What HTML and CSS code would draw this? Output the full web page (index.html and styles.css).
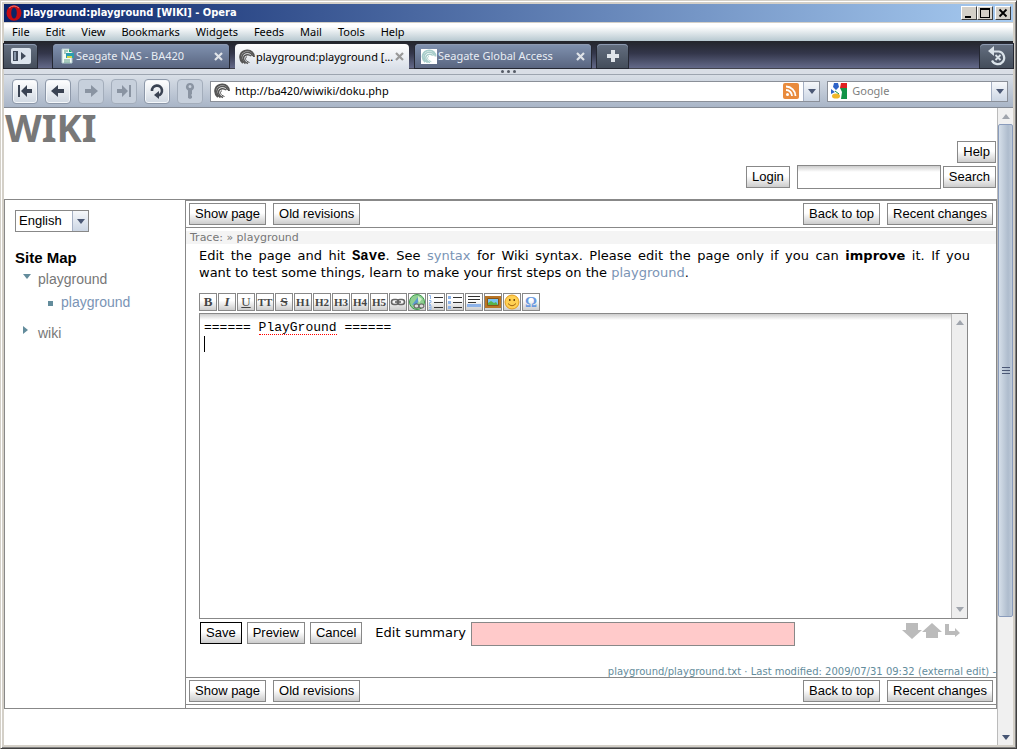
FILE: index.html
```html
<!DOCTYPE html>
<html lang="en">
<head>
<meta charset="utf-8">
<title>playground:playground [WIKI]</title>
<link rel="stylesheet" href="styles.css">
</head>
<body>
<svg class="defs" aria-hidden="true">
  <defs>
    <symbol id="swirl" viewBox="0 0 16 16">
      <g fill="none" stroke="currentColor">
        <path stroke-width="2" d="M4 14C-1 9 1 2 8 1.500C12 1.200 15 4 15 8"/>
        <path stroke-width="1.600" d="M6.500 14.500C0 10 3 4 8 3.500C11 3.200 13 5 13.500 7"/>
        <path stroke-width="1.500" d="M9 14.500C3 12 3.500 6.500 8 5.700C10 5.400 11 6 12 7"/>
        <path stroke-width="1" d="M10.500 13.500C6 12 5.500 9 8 7.500"/>
      </g>
    </symbol>
    <symbol id="down" viewBox="0 0 8 5"><path fill="currentColor" d="M0 0h8L4 5z"/></symbol>
    <symbol id="up" viewBox="0 0 8 5"><path fill="currentColor" d="M0 5h8L4 0z"/></symbol>
    <symbol id="cross" viewBox="0 0 9 9"><path stroke="currentColor" stroke-width="2.200" d="M1 1l7 7M8 1L1 8"/></symbol>
  </defs>
</svg>
<div class="window">
  <header class="titlebar">
    <svg class="opera" viewBox="0 0 16 16"><ellipse cx="8" cy="8" rx="7.500" ry="7.800" fill="#c60c12"/><path d="M3 3q5-4 10 0" stroke="#f47a70" fill="none"/><ellipse cx="8" cy="8" rx="2.800" ry="5.500" fill="#0b2567"/></svg>
    <span class="title">playground:playground [WIKI] - Opera</span>
    <div class="winbuttons">
      <button aria-label="Minimize"><svg viewBox="0 0 12 10"><path d="M2 8h6v2H2z"/></svg></button>
      <button aria-label="Maximize"><svg viewBox="0 0 12 10"><path fill-rule="evenodd" d="M1 0h10v10H1zM2 2v7h8V2z"/></svg></button>
      <button class="close" aria-label="Close"><svg viewBox="0 0 12 10"><path stroke="#000" stroke-width="1.800" d="M2.500 1.500l7 7M9.500 1.500l-7 7"/></svg></button>
    </div>
  </header>
  <nav class="menubar">
    <button>File</button><button>Edit</button><button>View</button><button>Bookmarks</button><button>Widgets</button><button>Feeds</button><button>Mail</button><button>Tools</button><button>Help</button>
  </nav>
  <div class="tabbar">
    <button class="panel" aria-label="Panels"><svg viewBox="0 0 20 16"><rect width="20" height="16" rx="2" fill="#dce4ed"/><path fill="#414b5b" d="M2 3h5v10H2zM10 4l5 4-5 4z"/><path fill="#8695a8" d="M3 4h2v8H3z"/></svg></button>
    <div class="tab">
      <svg class="favicon" viewBox="0 0 16 16"><path d="M3 1h7l3 3v11H3z" fill="#f4fbf5" stroke="#b4cdd0"/><path d="M5 3h4M5 5h2M5 12h6M5 14h6" stroke="#5b9a86"/><path d="M7 5h8v5H7z" fill="#2b9db0"/><path d="M8 8h5v2H8z" fill="#d5d94b"/><path d="M10 1l3 3h-3z" fill="#20a866"/></svg>
      <span>Seagate NAS - BA420</span><button aria-label="Close tab"><svg><use href="#cross"/></svg></button>
    </div>
    <div class="tab active">
      <svg class="favicon dark"><use href="#swirl"/></svg>
      <span>playground:playground [...</span><button aria-label="Close tab"><svg><use href="#cross"/></svg></button>
    </div>
    <div class="tab">
      <svg class="favicon teal"><use href="#swirl"/></svg>
      <span>Seagate Global Access</span><button aria-label="Close tab"><svg><use href="#cross"/></svg></button>
    </div>
    <button class="newtab" aria-label="New tab"><svg viewBox="0 0 12 12"><path fill="#dfe4ea" d="M4 0h4v4h4v4H8v4H4V8H0V4h4z"/></svg></button>
    <button class="trash" aria-label="Closed tabs"><svg viewBox="0 0 20 20"><path fill="none" stroke="#d9e2e9" stroke-width="2.200" d="M6 5.500h6a6.400 6.400 0 1 1-7 9"/><path fill="#d9e2e9" d="M1 5l6-5v10z"/><path stroke="#d9e2e9" stroke-width="1.800" d="M8.500 9l5 5M13.500 9l-5 5"/></svg></button>
  </div>
  <div class="splitter"><i></i><i></i><i></i></div>
  <div class="toolbar">
    <button aria-label="Rewind"><svg viewBox="0 0 16 16"><path d="M1 2h2v12H1zM4 8l6-6v4h5v4h-5v4z"/></svg></button>
    <button aria-label="Back"><svg viewBox="0 0 16 16"><path d="M1 8l7-6v4h6v4H8v4z"/></svg></button>
    <button class="off" aria-label="Forward"><svg viewBox="0 0 16 16"><path d="M15 8L8 2v4H2v4h6v4z"/></svg></button>
    <button class="off" aria-label="Fast forward"><svg viewBox="0 0 16 16"><path d="M15 2h-2v12h2zM12 8L6 2v4H1v4h5v4z"/></svg></button>
    <button aria-label="Reload"><svg viewBox="0 0 16 16"><path fill="none" stroke="#3a4353" stroke-width="2.600" d="M3 8a5 5 0 1 1 6 4.500"/><path d="M5 12l5-4v8z"/></svg></button>
    <button class="off" aria-label="Wand"><svg viewBox="0 0 16 16"><path fill-rule="evenodd" d="M8 0a4 4 0 0 0-2 7.500V15l2 1 2-1v-2l-1-1 1-1V7.500A4 4 0 0 0 8 0zm0 2a1.500 1.500 0 1 1 0 3 1.500 1.500 0 0 1 0-3z"/></svg></button>
    <div class="field address">
      <svg class="favicon dark"><use href="#swirl"/></svg>
      <input aria-label="Address" value="http://ba420/wiwiki/doku.php">
      <svg class="feed" viewBox="0 0 16 16"><rect width="16" height="16" rx="2" fill="#e98b3d"/><circle cx="4.500" cy="11.500" r="1.500" fill="#fff"/><path fill="none" stroke="#fff" stroke-width="1.800" d="M3 7a6 6 0 0 1 6 6M3 3.500a9.500 9.500 0 0 1 9.500 9.500"/></svg>
      <button class="drop" aria-label="Address history"><svg><use href="#down"/></svg></button>
    </div>
    <div class="field web">
      <svg class="favicon" viewBox="0 0 16 16"><path fill="#e02020" d="M8 0h8v5H8z"/><path fill="#129447" d="M8 5h8v11H9z"/><path fill="#fff" d="M6 0h4l-1 5 2 4-1 7H0V7h6z"/><path fill="#2e63c8" d="M3 0h4l1 4-3 3-3-3zM0 6l4 3-4 2z"/><ellipse cx="5" cy="13" rx="4" ry="2.600" fill="#f0b629"/><path d="M4 8l4 3" stroke="#129447"/></svg>
      <input aria-label="Web search" placeholder="Google">
      <button class="drop" aria-label="Search engines"><svg><use href="#down"/></svg></button>
    </div>
  </div>
  <div class="viewport">
    <div class="page">
      <header class="head">
        <h1>WIKI</h1>
        <div class="row end"><button class="btn">Help</button></div>
        <form class="row end search"><button class="btn login" type="button">Login</button><input aria-label="Search text"><button class="btn" type="button">Search</button></form>
      </header>
      <div class="columns">
        <aside class="side">
          <div class="language"><select aria-label="Language"><option>English</option></select><span class="drop"><svg><use href="#down"/></svg></span></div>
          <h2>Site Map</h2>
          <ul class="tree">
            <li class="open"><a href="#">playground</a>
              <ul><li class="leaf"><a href="#">playground</a></li></ul>
            </li>
            <li class="shut"><a href="#">wiki</a></li>
          </ul>
        </aside>
        <main class="main">
          <div class="bar"><button class="btn">Show page</button><button class="btn">Old revisions</button><span class="space"></span><button class="btn">Back to top</button><button class="btn">Recent changes</button></div>
          <div class="trace">Trace: » playground</div>
          <div class="body">
            <p>Edit the page and hit <code>Save</code>. See <a href="#">syntax</a> for Wiki syntax. Please edit the page only if you can <b>improve</b> it. If you <span class="keep">want to test</span> some things, learn to make your first steps on the <a href="#">playground</a>.</p>
            <div class="tools">
              <button>B</button><button class="it">I</button><button class="un">U</button><button class="small">TT</button><button class="st">S</button><button class="small">H1</button><button class="small">H2</button><button class="small">H3</button><button class="small">H4</button><button class="small">H5</button>
              <button aria-label="Internal link"><svg viewBox="0 0 16 16"><g fill="none" stroke="#666" stroke-width="1.600"><rect x="1.500" y="5.500" width="7" height="5" rx="2.500"/><rect x="7.500" y="5.500" width="7" height="5" rx="2.500"/><path d="M5 8h6"/></g></svg></button>
              <button aria-label="External link"><svg viewBox="0 0 16 16"><circle cx="8" cy="8" r="7.500" fill="#8fd092" stroke="#3f9a4c"/><path fill="#5a97cf" d="M3 11l6-8 2 1-3 6z"/><path fill="#d5f0c9" d="M9 2l4 3-3 4-1-3z"/><g fill="#ddd" stroke="#555"><rect x="5" y="10" width="5" height="4" rx="2"/><rect x="10" y="10" width="5" height="4" rx="2"/></g></svg></button>
              <button aria-label="Ordered list"><svg viewBox="0 0 16 16"><path stroke="#333" d="M6 3.500h9M6 8.500h9M6 13.500h9"/><path fill="none" stroke="#8fb5ea" d="M1 1.500h1.500V5M1 6.500h2v2H1.500v2H3M1 11.500h2v4H1M1 13.500h2"/></svg></button>
              <button aria-label="Unordered list"><svg viewBox="0 0 16 16"><path stroke="#333" d="M6 3.500h9M6 8.500h9M6 13.500h9"/><path fill="#8fb5ea" d="M1 2h3v3H1zM1 7h3v3H1zM1 12h3v3H1z"/></svg></button>
              <button aria-label="Horizontal line"><svg viewBox="0 0 16 16"><path stroke="#333" d="M2 2.500h12M2 5.500h12M2 8.500h8"/><path fill="#8db3ea" d="M1 10h14v3H1z"/></svg></button>
              <button aria-label="Image"><svg viewBox="0 0 16 16"><path fill="#b87525" d="M0 2h16v12H0z"/><path fill="#76c4f4" stroke="#8a5414" d="M2.500 4.500h11v7h-11z"/><path fill="#58b34a" d="M3 11V9l3-2 3 2 2-1 2 3z"/></svg></button>
              <button aria-label="Smiley"><svg viewBox="0 0 16 16"><circle cx="8" cy="8" r="7" fill="#ffd052" stroke="#e39c1e"/><path fill="#754a0d" d="M5 5h1.500v2H5zM9.500 5H11v2H9.500z"/><path d="M4 9.500q4 4.500 8 0" fill="none" stroke="#a26412"/></svg></button>
              <button class="omega">Ω</button>
            </div>
            <div class="editor">
              <textarea aria-label="Page text" spellcheck="false">====== PlayGround ======
</textarea>
              <span class="spell"></span><span class="caret"></span>
              <div class="scroll"><svg><use href="#up"/></svg><svg><use href="#down"/></svg></div>
            </div>
            <div class="row actions">
              <button class="btn primary">Save</button><button class="btn">Preview</button><button class="btn">Cancel</button>
              <label for="summary">Edit summary</label><input id="summary">
              <span class="space"></span>
              <svg class="sizes" viewBox="0 0 58 16"><path d="M4 0h12v7h4L10 16 0 7h4zM30 0l10 9h-4v6H24V9h-4zM43 1h4v7h6V5l5 5-5 4v-2H43z"/></svg>
            </div>
          </div>
          <div class="info">playground/playground.txt · Last modified: 2009/07/31 09:32 (external edit) -</div>
          <div class="bar bottom"><button class="btn">Show page</button><button class="btn">Old revisions</button><span class="space"></span><button class="btn">Back to top</button><button class="btn">Recent changes</button></div>
        </main>
      </div>
    </div>
    <div class="pagescroll">
      <span class="arrow dim"><svg><use href="#up"/></svg></span>
      <span class="thumb"><i></i><i></i><i></i></span>
      <span class="arrow"><svg><use href="#down"/></svg></span>
    </div>
  </div>
</div>
</body>
</html>
```
FILE: styles.css
```css
* { box-sizing: border-box; }
body { margin: 0; font: 11px/14px "Noto Sans", sans-serif; color: #000; }
button, input, select, textarea { font: inherit; color: inherit; margin: 0; padding: 0; border: 0; border-radius: 0; background: none; outline: 0; }
button svg, .field svg, .drop svg { display: block; flex: none; }
a { color: #7a94b5; text-decoration: none; }
.defs { position: absolute; width: 0; height: 0; }
.space { flex: 1; }

/* window frame */
.window { display: flex; flex-direction: column; min-height: 100vh; padding: 2px 3px 3px 3px; background: #d4d0c8; border: 1px solid; border-color: #d4d0c8 #404040 #404040 #d4d0c8; box-shadow: inset 1px 1px #fff, inset -1px -1px #808080; }
.titlebar { display: flex; align-items: center; height: 19px; padding: 0 2px 0 2px; margin-top: 1px; background: linear-gradient(90deg, #0a246a, #a6caf0); border-bottom: 1px solid #d4d0c8; color: #fff; font: bold 11px/18px "DejaVu Sans Condensed", "DejaVu Sans", sans-serif; }
.opera { width: 16px; height: 16px; margin-right: 1px; }
.title { flex: 1; }
.winbuttons { display: flex; }
.winbuttons button { width: 16px; height: 14px; display: grid; place-items: center; background: #d4d0c8; border: 1px solid; border-color: #fff #404040 #404040 #fff; }
.winbuttons .close { margin-left: 2px; }
.winbuttons svg { width: 12px; height: 10px; }
.menubar { display: flex; gap: 16px; height: 18px; padding: 0 8px; background: linear-gradient(#fff 20%, #b7c8d0); }

/* tabs */
.tabbar { display: flex; height: 28px; padding-top: 3px; background: linear-gradient(#23252b, #33364a 45%, #636989); border-bottom: 1px solid #42434d; color: #e8edf4; }
.tab, .newtab, .panel, .trash { height: 24px; border-radius: 4px 4px 0 0; background: linear-gradient(#8092b0, #596580); box-shadow: 0 0 0 1px #252833, inset 0 1px #8d9ab0; }
.tab { flex: 0 1 176px; display: flex; align-items: center; padding: 0 6px 0 6px; margin-right: 6px; white-space: nowrap; min-width: 0; }
.tab span { flex: 1; overflow: hidden; margin-left: 1px; }
.tab button svg { width: 9px; height: 9px; color: #dfe3e8; }
.tab.active { height: 25px; flex-basis: 174px; padding: 0 5px 0 4px; color: #000; background: linear-gradient(#fff, #d9dfe8); box-shadow: none; }
.tab.active button svg { color: #999; }
.favicon { width: 16px; height: 16px; flex: none; }
.dark { color: #555; }
.teal { color: #a7cdca; background: #fff; }
.tabbar .tab .favicon.teal { height: 15px; }
.panel, .newtab, .trash { display: grid; place-items: center; background: linear-gradient(#646f80, #444d5b); }
.panel { width: 33px; margin-right: 16px; border-radius: 0 4px 0 0; }
.panel svg { width: 20px; height: 16px; }
.newtab { width: 31px; margin-right: auto; }
.newtab svg { width: 12px; height: 12px; }
.trash { width: 33px; border-radius: 4px 0 0; }
.trash svg { width: 20px; height: 20px; }
.splitter { display: flex; justify-content: center; gap: 3px; height: 6px; padding-top: 1px; background: #d9dee6; border-bottom: 1px solid #9da5b0; }
.splitter i { width: 3px; height: 3px; border-radius: 50%; background: #555b66; }

/* browser toolbar */
.toolbar { display: flex; align-items: center; gap: 7px; height: 33px; padding: 0 5px 0 8px; background: linear-gradient(#d9dfe7, #a9b5c7); border-bottom: 1px solid #858b95; }
.toolbar > button { display: grid; place-items: center; width: 26px; height: 25px; border: 1px solid #8d98a9; border-radius: 4px; background: linear-gradient(#fff, #d0d8e2); box-shadow: inset 0 0 0 1px #f4f7fa; }
.toolbar > button svg { width: 16px; height: 16px; fill: #3a4353; }
.toolbar > .off { border-color: #a3adbb; background: #c7d0dc; box-shadow: none; }
.toolbar > .off svg { fill: #8a94a2; }
.field { display: flex; align-items: center; min-width: 0; height: 21px; background: #fff; border: 1px solid #8a8f98; padding-left: 3px; }
.field input { flex: 1; min-width: 0; margin-left: 5px; }
.address { flex: 620; }
.web { flex: 180; }
.web input::placeholder { color: #808080; opacity: 1; }
.feed { width: 16px; height: 16px; margin-right: 4px; }
.drop { display: grid; place-items: center; width: 16px; align-self: stretch; border-left: 1px solid #a5b0c4; background: linear-gradient(#f6f8fb, #ccd6e4); color: #4b5875; }
.drop svg { width: 8px; height: 5px; }

/* page */
.viewport { flex: 1; display: flex; background: #fff; }
.page { flex: 1; min-width: 0; font: 13px/17px "DejaVu Sans", sans-serif; }
.head { padding: 0 1px 10px 1px; }
h1 { margin: 0; font: bold 38px/33px "Noto Sans", sans-serif; color: #787878; padding-top: 3px; height: 33px; }
.row { display: flex; }
.end { justify-content: flex-end; }
.search { align-items: center; height: 24px; margin-top: 2px; }
.search input { width: 144px; height: 24px; border: 1px solid #888; margin: 0 2px 0 7px; background: linear-gradient(#ccc, #fff 6px); }
.btn { height: 22px; padding: 0 5px; border: 1px solid #888; background: linear-gradient(#fff 45%, #ccc); font: 13px/20px "Liberation Sans", Arial, sans-serif; white-space: nowrap; }
.columns { display: flex; border: 1px solid #888; }
.side { width: 180px; flex: none; padding: 10px; font: 14px/23px "Liberation Sans", Arial, sans-serif; }
.language { display: flex; width: 74px; height: 22px; border: 1px solid #888; }
.language select { appearance: none; flex: 1; min-width: 0; font-size: 13px; line-height: 20px; padding-left: 3px; }
h2 { margin: 16px 0 0; font: bold 15px/20px "Liberation Sans", Arial, sans-serif; }
.tree, .tree ul { margin: 0; padding: 0 0 0 23px; list-style: none; }
.tree > li > a { color: #777; }
.tree li::before { content: ""; float: left; }
.open::before { margin: 6px 0 0 -15px; border: 4px solid transparent; border-top: 5px solid #638c9c; border-bottom: 0; }
.shut { margin-top: 8px; }
.shut::before { margin: 4px 0 0 -15px; border: 4px solid transparent; border-left: 5px solid #638c9c; border-right: 0; }
.leaf::before { width: 5px; height: 5px; margin: 10px 0 0 -13px; background: #638c9c; }
.main { flex: 1; min-width: 0; border-left: 1px solid #888; border-top: 1px solid #888; }
.bar { display: flex; gap: 7px; padding: 2px 3px; border-bottom: 1px solid #888; }
.trace { margin-top: 3px; padding-left: 4px; background: #f4f4f4; color: #777; font-size: 11px; line-height: 13px; }
.body { padding: 3px 28px 0 13px; }
p { margin: 0 -2px 12px 0; text-align: justify; }
code { font: bold 14px/14px "Liberation Mono", monospace; }
.keep { white-space: nowrap; }
.tools { display: flex; gap: 1px; }
.tools button { display: grid; place-items: center; width: 18px; height: 18px; border: 1px solid #888; background: linear-gradient(#fff 40%, #ccc); color: #444; font: bold 13px/16px "Liberation Serif", serif; }
.tools .small { font-size: 11px; }
.tools .it { font-style: italic; }
.tools .un { text-decoration: underline; font-weight: normal; }
.tools .st { text-decoration: line-through; }
.tools .omega { color: #6b9ae0; font-size: 15px; }
.tools svg { width: 16px; height: 16px; }
.editor { position: relative; display: flex; height: 306px; margin-top: 2px; border: 1px solid #888; background: linear-gradient(#ccc, #fff 6px); }
.editor textarea { flex: 1; min-width: 0; resize: none; overflow: hidden; padding: 5px 4px; font: 13px/17px "Liberation Mono", monospace; }
.spell { position: absolute; left: 59px; top: 20px; width: 78px; border-bottom: 1px dotted #f00; }
.caret { position: absolute; left: 4px; top: 22px; width: 1px; height: 16px; background: #000; }
.scroll { display: flex; flex-direction: column; justify-content: space-between; align-items: center; width: 16px; padding: 6px 0; border-left: 1px solid #bbb; background: #eee; color: #a0a5ad; }
.scroll svg, .arrow svg { width: 8px; height: 5px; }
.actions { padding: 3px 0 0 1px; gap: 5px; align-items: flex-start; height: 47px; }
.primary { border-color: #000; }
.actions label { margin-left: 8px; line-height: 22px; white-space: nowrap; }
.actions input { width: 324px; height: 24px; border: 1px solid #888; background: #ffcaca; }
.sizes { width: 58px; height: 16px; margin: 1px 8px 0 0; fill: #bbb; flex: none; }
.info { height: 12px; line-height: 12px; font-size: 10px; color: #638c9c; text-align: right; border-bottom: 1px solid #888; }
.bottom { margin-bottom: 3px; }

/* page scrollbar */
.pagescroll { display: flex; flex-direction: column; width: 16px; border-left: 1px solid #bbb; background: #f0f0f0; }
.arrow { display: grid; place-items: center; height: 16px; color: #465573; }
.dim { color: #a0a5ad; }
.thumb { display: flex; flex-direction: column; align-items: center; justify-content: center; gap: 2px; flex: 0 1 493px; margin-bottom: auto; border: 1px solid #8a9cbc; border-radius: 2px; background: linear-gradient(90deg, #d5dfe9, #aebccd 70%, #bfcbd9); }
.thumb i { width: 8px; height: 1px; background: #4b5875; }
```
